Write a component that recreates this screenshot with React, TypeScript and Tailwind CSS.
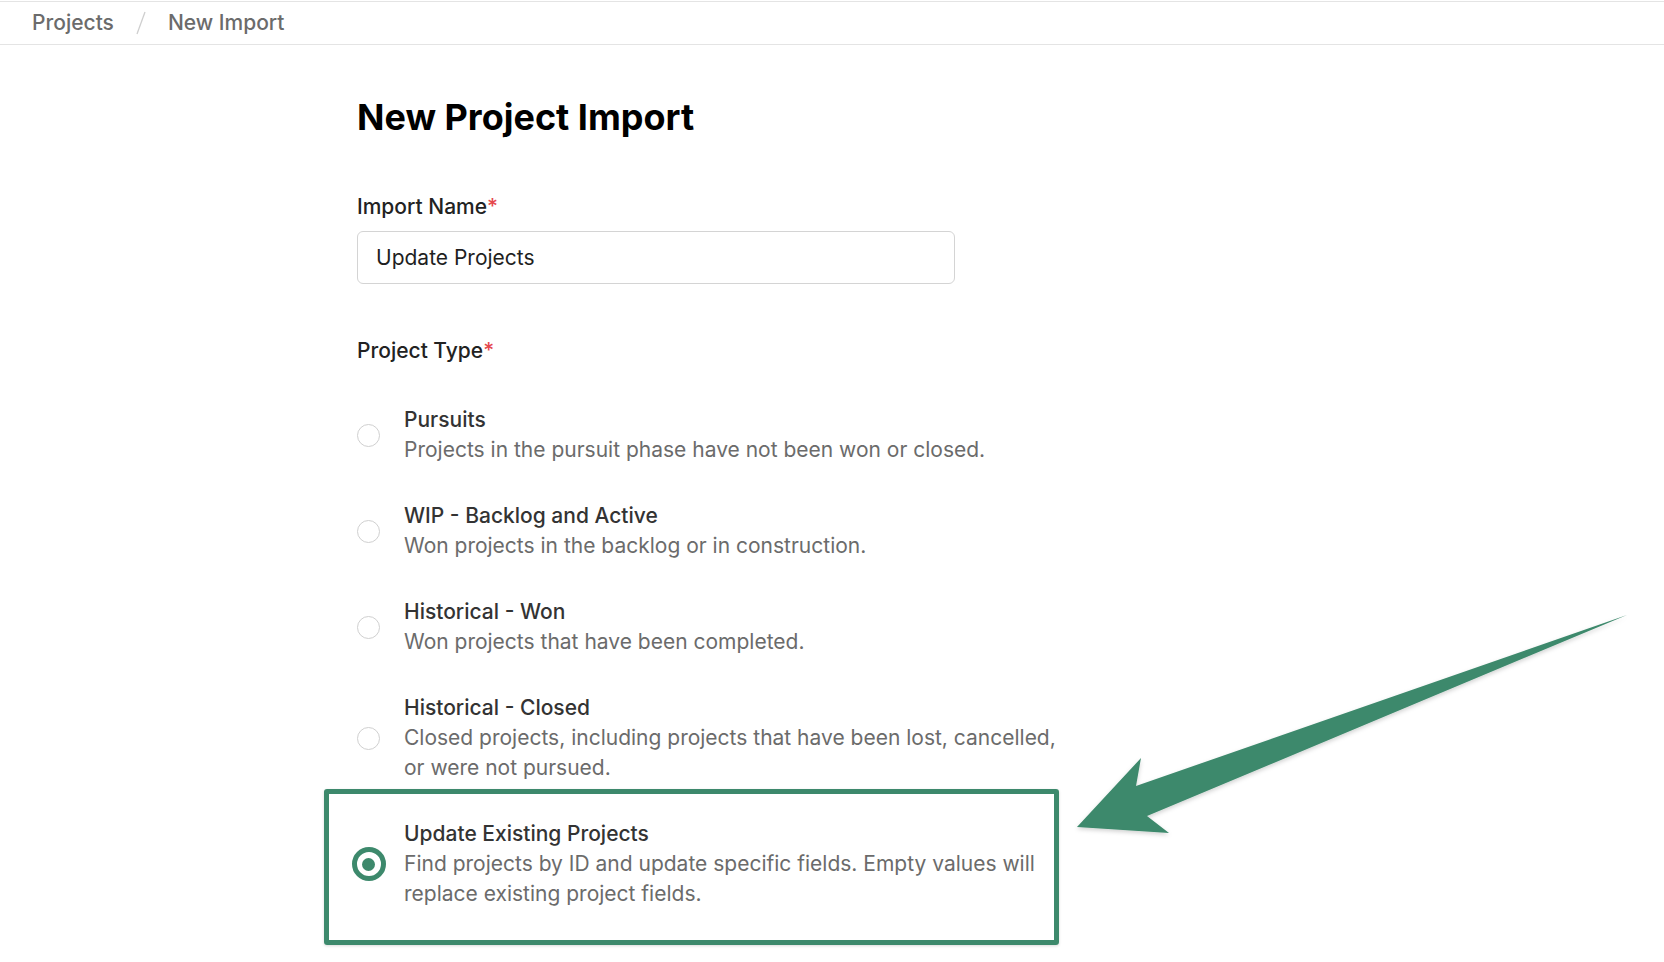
import React from "react";

type Option = {
  title: string;
  description: string;
  selected?: boolean;
};

const options: Option[] = [
  {
    title: "Pursuits",
    description: "Projects in the pursuit phase have not been won or closed.",
  },
  {
    title: "WIP - Backlog and Active",
    description: "Won projects in the backlog or in construction.",
  },
  {
    title: "Historical - Won",
    description: "Won projects that have been completed.",
  },
  {
    title: "Historical - Closed",
    description:
      "Closed projects, including projects that have been lost, cancelled, or were not pursued.",
  },
  {
    title: "Update Existing Projects",
    description:
      "Find projects by ID and update specific fields. Empty values will replace existing project fields.",
    selected: true,
  },
];

const Radio = ({ selected }: { selected?: boolean }) => (
  <div className="flex w-[23px] shrink-0 items-center justify-center">
    {selected ? (
      <div className="flex h-[34px] w-[34px] shrink-0 items-center justify-center rounded-full border-[5px] border-[#3d896c] bg-white">
        <div className="h-[13px] w-[13px] rounded-full bg-[#3d896c]" />
      </div>
    ) : (
      <div className="h-[23px] w-[23px] shrink-0 rounded-full border border-[#d0d0d0] bg-white" />
    )}
  </div>
);

const OptionRow = ({ option }: { option: Option }) => (
  <div className="relative flex items-center gap-[24px]">
    {option.selected && (
      <div className="pointer-events-none absolute left-[-33px] top-[-30px] h-[156px] w-[735px] rounded-[3px] border-[5px] border-[#3d896c] shadow-[0_1px_3px_rgba(0,0,0,0.15)]" />
    )}
    <Radio selected={option.selected} />
    <div className="flex flex-col leading-[30px]">
      <span className="font-medium text-[#333333]">{option.title}</span>
      <span className="text-[#6b6b6b]">{option.description}</span>
    </div>
  </div>
);

const Arrow = () => (
  <svg
    className="pointer-events-none absolute left-0 top-0"
    width="1664"
    height="962"
    viewBox="0 0 1664 962"
  >
    <defs>
      <filter id="arrow-shadow" x="-10%" y="-10%" width="120%" height="130%">
        <feDropShadow dx="0" dy="2" stdDeviation="2" floodColor="#000" floodOpacity="0.18" />
      </filter>
    </defs>
    <polygon
      points="1077,827 1141,758 1136,786 1627,615 1147,816 1169,833"
      fill="#3d896c"
      filter="url(#arrow-shadow)"
    />
  </svg>
);

export default function App() {
  return (
    <div className="relative min-h-screen overflow-hidden bg-white font-['Inter','Liberation_Sans',sans-serif] text-[21px]">
      {/* breadcrumb */}
      <div className="mt-px flex h-[44px] items-center border-y border-[#e4e4e4] px-[32px] font-medium text-[#6b6b6b]">
        <span>Projects</span>
        <svg className="mx-[22px]" width="10" height="26" viewBox="0 0 10 26">
          <line x1="9" y1="2" x2="1" y2="24" stroke="#cfcfcf" strokeWidth="1.3" />
        </svg>
        <span>New Import</span>
      </div>

      <main className="w-[1066px] pl-[357px] pt-[50px]">
        <h1 className="text-[36px] font-bold leading-[44px] text-black">New Project Import</h1>

        <div className="mt-[52px]">
          <label className="block font-medium leading-[31px] text-[#222222]">
            Import Name<span className="text-[#e5484d]">*</span>
          </label>
          <input
            type="text"
            defaultValue="Update Projects"
            className="mt-[9px] block h-[53px] w-[598px] rounded-[6px] border border-[#d4d4d4] px-[18px] text-[#1f1f1f] outline-none"
          />
        </div>

        <div className="mt-[51px]">
          <label className="block font-medium leading-[31px] text-[#222222]">
            Project Type<span className="text-[#e5484d]">*</span>
          </label>
          <div className="mt-[39px] flex flex-col gap-[36px]">
            {options.map((option) => (
              <OptionRow key={option.title} option={option} />
            ))}
          </div>
        </div>
      </main>

      <Arrow />
    </div>
  );
}
